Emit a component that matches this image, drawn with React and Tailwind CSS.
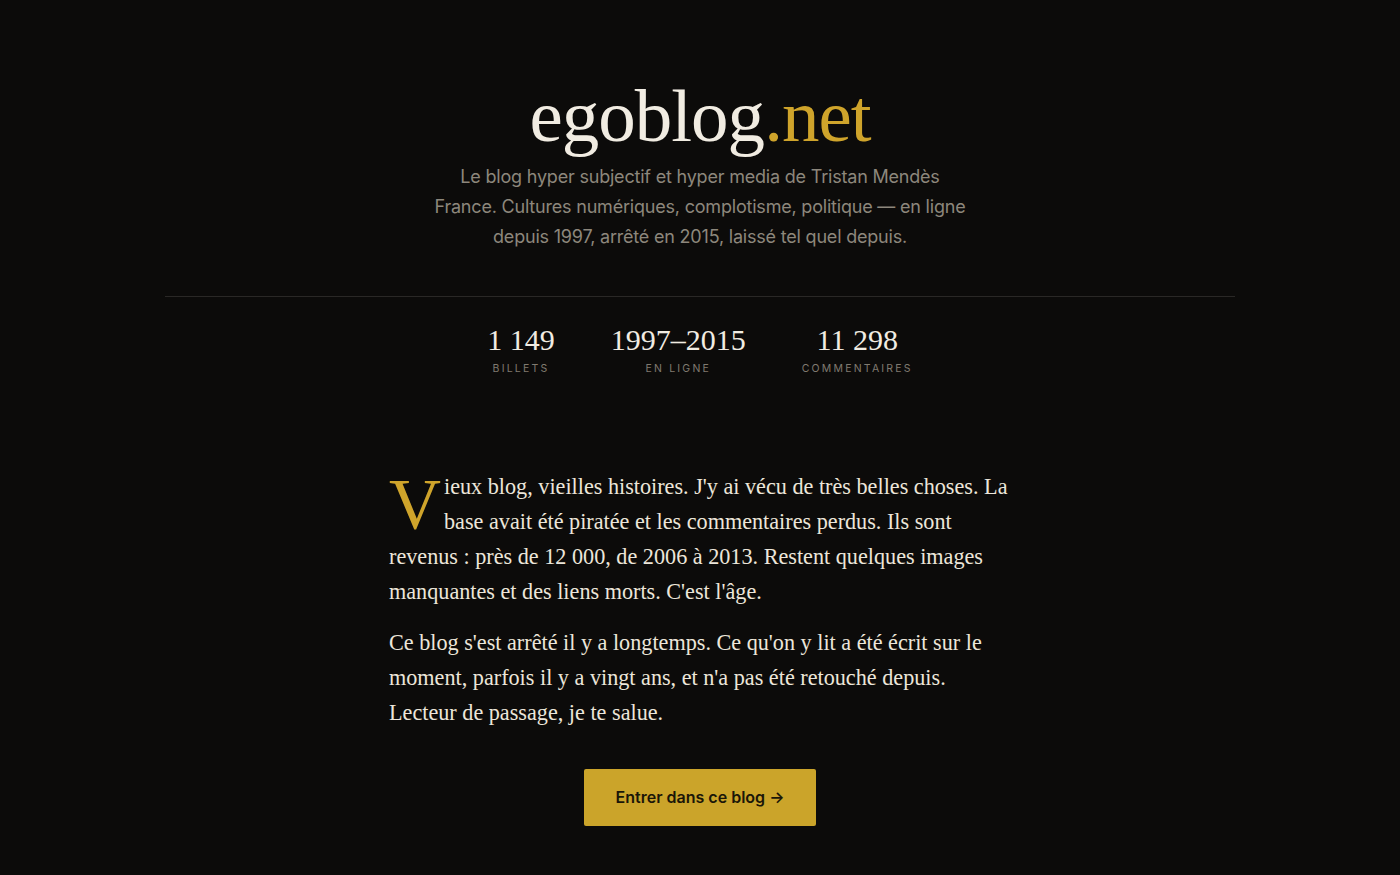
import React from "react";

const serif = { fontFamily: '"Liberation Serif", "DejaVu Serif", serif' };
const sans = { fontFamily: 'Inter, "Noto Sans", sans-serif' };

const stats = [
  { value: "1 149", label: "Billets" },
  { value: "1997–2015", label: "En ligne" },
  { value: "11 298", label: "Commentaires" },
];

const App = () => {
  return (
    <div className="min-h-screen bg-[#0c0b0a] text-[#ece6da]">
      <header className="flex flex-col items-center pt-[72px]">
        <h1 className="text-[75px] leading-[88px] tracking-[-1px] text-[#f1ece2]" style={serif}>
          egoblog<span className="text-[#cfa42b]">.net</span>
        </h1>
        <p
          className="mt-[2px] max-w-[540px] text-center text-[18px] leading-[30px] tracking-[-0.2px] text-[#8d877c]"
          style={sans}
        >
          Le blog hyper subjectif et hyper media de Tristan Mendès France. Cultures numériques,
          complotisme, politique — en ligne depuis 1997, arrêté en 2015, laissé tel quel depuis.
        </p>
      </header>

      <div className="mx-auto mt-[44px] w-[1070px] border-t border-[#2a2826]" />

      <div className="flex justify-center gap-14 pt-[23px]">
        {stats.map((s) => (
          <div key={s.label} className="flex flex-col items-center">
            <span className="text-[30px] leading-[40px] text-[#f1ece2]" style={serif}>
              {s.value}
            </span>
            <span
              className="mt-[1px] text-[10.5px] uppercase tracking-[2.2px] text-[#807a70]"
              style={sans}
            >
              {s.label}
            </span>
          </div>
        ))}
      </div>

      <main className="mx-auto mt-[92px] w-[622px] text-[22.2px] leading-[35px] text-[#ece6da]" style={serif}>
        <p>
          <span className="float-left mr-[3px] mt-[7px] text-[72px] leading-[56px] text-[#cfa42b]">
            V
          </span>
          ieux blog, vieilles histoires. J'y ai vécu de très belles choses. La base avait été
          piratée et les commentaires perdus. Ils sont revenus : près de 12 000, de 2006 à 2013.
          Restent quelques images manquantes et des liens morts. C'est l'âge.
        </p>
        <p className="mt-[16px]">
          Ce blog s'est arrêté il y a longtemps. Ce qu'on y lit a été écrit sur le moment, parfois
          il y a vingt ans, et n'a pas été retouché depuis. Lecteur de passage, je te salue.
        </p>
        <div className="mt-[39px] flex justify-center">
          <a
            href="#"
            className="flex h-[57px] w-[232px] items-center justify-center rounded-[2px] bg-[#cba42a] text-[16px] font-semibold text-[#1a1608]"
            style={sans}
          >
            Entrer dans ce blog →
          </a>
        </div>
      </main>
    </div>
  );
};

export default App;
